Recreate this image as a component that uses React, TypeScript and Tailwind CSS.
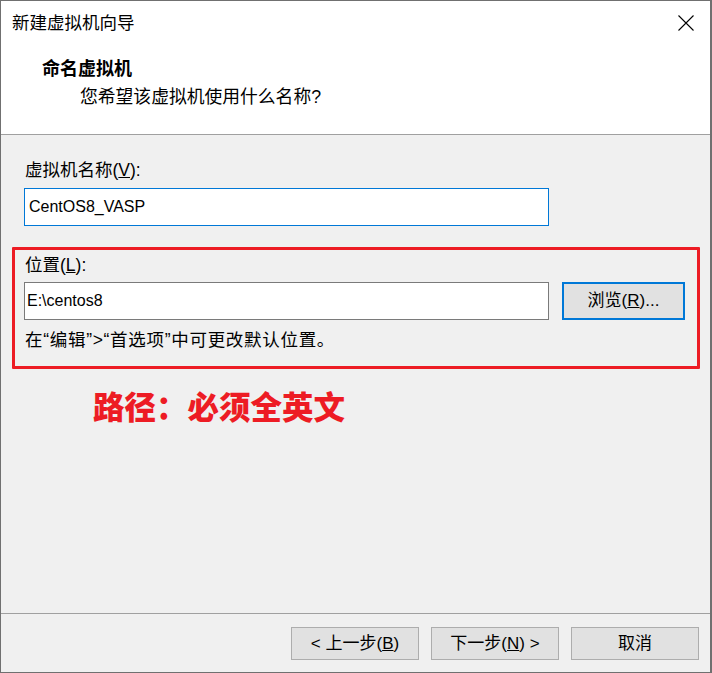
const font = '[font-family:"Liberation_Sans","Noto_Sans_CJK_SC",sans-serif]';

const Btn = ({ children }: { children: React.ReactNode }) => (
  <button className="flex items-center justify-center w-[128px] h-[33px] bg-[#e1e1e1] border border-[#adadad] text-[17px] text-black leading-none">
    {children}
  </button>
);

export default function App() {
  return (
    <div className={`w-[712px] h-[673px] flex flex-col bg-[#f0f0f0] border border-r-2 border-[#707070] text-black ${font}`}>
      {/* title + header */}
      <div className="h-[134px] bg-white border-b border-[#a0a0a0] flex flex-col shrink-0">
        <div className="h-[43px] flex items-center justify-between pl-[11px] pr-[16px]">
          <span className="text-[17.5px] leading-[22px]">新建虚拟机向导</span>
          <svg width="16" height="16" viewBox="0 0 16 16" className="mt-[1px]">
            <path d="M0.5 0.5L15.5 15.5M15.5 0.5L0.5 15.5" stroke="#000" strokeWidth="1.1" fill="none" />
          </svg>
        </div>
        <div className="pl-[41px] pt-[14px]">
          <div className="text-[18px] leading-[22px] font-bold">命名虚拟机</div>
          <div className="pl-[38px] mt-[6px] text-[17.8px] leading-[22px]">您希望该虚拟机使用什么名称?</div>
        </div>
      </div>

      {/* body */}
      <div className="flex-1 flex flex-col pl-[11px] pr-[11px]">
        <div className="pl-[13px] mt-[24px] text-[17.5px] leading-[22px]">
          虚拟机名称(<u>V</u>):
        </div>
        <div className="ml-[12px] mt-[7px] w-[525px] h-[38px] bg-white border border-[#0078d7] flex items-center pl-[4px] text-[16px]">
          CentOS8_VASP
        </div>

        <div className="mt-[21px] w-[688px] h-[122px] border-[3px] border-[#ed1c24] rounded-[1px] pl-[9px] pt-[4px] flex flex-col">
          <div className="pl-[1px] text-[17.5px] leading-[22px]">
            位置(<u>L</u>):
          </div>
          <div className="mt-[6px] flex items-center gap-[13px]">
            <div className="w-[525px] h-[38px] bg-white border border-[#7a7a7a] flex items-center pl-[2px] text-[16px]">
              E:\centos8
            </div>
            <button className="w-[123px] h-[38px] bg-[#e1e1e1] border-2 border-[#0078d7] flex items-center justify-center text-[17px]">
              浏览(<u>R</u>)...
            </button>
          </div>
          <div className="mt-[9px] pl-[1px] text-[17.5px] leading-[22px] tracking-[0.7px]">
            在“编辑”&gt;“首选项”中可更改默认位置。
          </div>
        </div>

        <div className="mt-[21px] pl-[81px] text-[31.5px] leading-[36px] font-black text-[#ed1c24] [text-shadow:0_0_2px_#fff,0_0_1px_#d0d0d0]">
          路径：必须全英文
        </div>
      </div>

      {/* footer */}
      <div className="h-[59px] shrink-0 border-t border-[#a0a0a0] flex items-start justify-end gap-[12px] pt-[13px] pr-[11px]">
        <Btn>
          &lt; 上一步(<u>B</u>)
        </Btn>
        <Btn>
          下一步(<u>N</u>) &gt;
        </Btn>
        <Btn>取消</Btn>
      </div>
    </div>
  );
}
